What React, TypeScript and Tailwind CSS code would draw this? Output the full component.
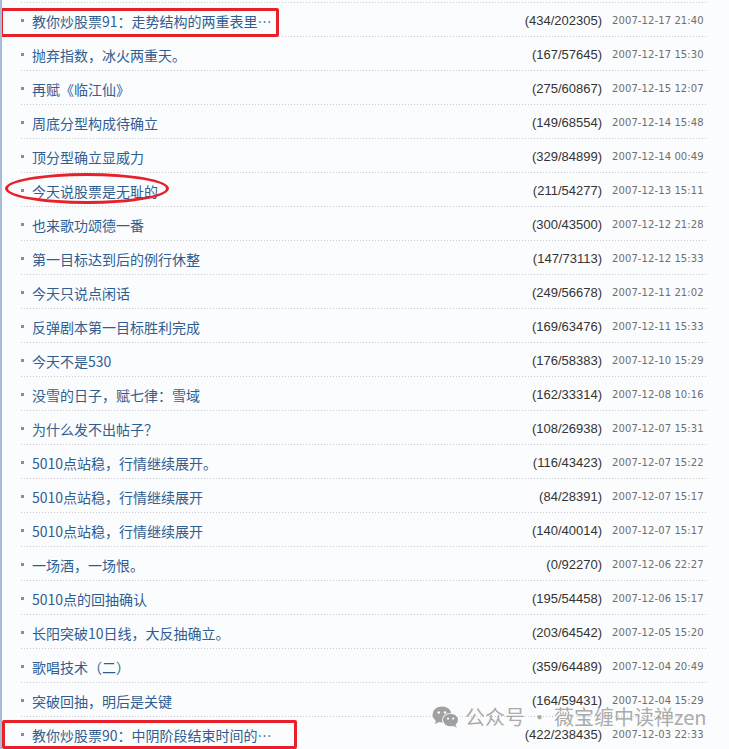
import React from "react";

const rows: [string, string, string][] = [
  ["教你炒股票91：走势结构的两重表里…", "(434/202305)", "2007-12-17 21:40"],
  ["抛弃指数，冰火两重天。", "(167/57645)", "2007-12-17 15:30"],
  ["再赋《临江仙》", "(275/60867)", "2007-12-15 12:07"],
  ["周底分型构成待确立", "(149/68554)", "2007-12-14 15:48"],
  ["顶分型确立显威力", "(329/84899)", "2007-12-14 00:49"],
  ["今天说股票是无耻的", "(211/54277)", "2007-12-13 15:11"],
  ["也来歌功颂德一番", "(300/43500)", "2007-12-12 21:28"],
  ["第一目标达到后的例行休整", "(147/73113)", "2007-12-12 15:33"],
  ["今天只说点闲话", "(249/56678)", "2007-12-11 21:02"],
  ["反弹剧本第一目标胜利完成", "(169/63476)", "2007-12-11 15:33"],
  ["今天不是530", "(176/58383)", "2007-12-10 15:29"],
  ["没雪的日子，赋七律：雪域", "(162/33314)", "2007-12-08 10:16"],
  ["为什么发不出帖子？", "(108/26938)", "2007-12-07 15:31"],
  ["5010点站稳，行情继续展开。", "(116/43423)", "2007-12-07 15:22"],
  ["5010点站稳，行情继续展开", "(84/28391)", "2007-12-07 15:17"],
  ["5010点站稳，行情继续展开", "(140/40014)", "2007-12-07 15:17"],
  ["一场酒，一场恨。", "(0/92270)", "2007-12-06 22:27"],
  ["5010点的回抽确认", "(195/54458)", "2007-12-06 15:17"],
  ["长阳突破10日线，大反抽确立。", "(203/64542)", "2007-12-05 15:20"],
  ["歌唱技术（二）", "(359/64489)", "2007-12-04 20:49"],
  ["突破回抽，明后是关键", "(164/59431)", "2007-12-04 15:29"],
  ["教你炒股票90：中阴阶段结束时间的…", "(422/238435)", "2007-12-03 22:33"],
];

function Dots() {
  return (
    <div className="h-px w-full bg-[linear-gradient(to_right,#cacad0_1px,transparent_1px)] bg-[length:3px_1px] bg-repeat-x" />
  );
}

function WeChatIcon() {
  return (
    <svg width="28" height="22" viewBox="0 0 28 22">
      <ellipse cx="10" cy="8.5" rx="9.5" ry="8" fill="#a0a0a0" />
      <path d="M4 14 L3 18 L8 15.5 Z" fill="#a0a0a0" />
      <circle cx="6.8" cy="6.5" r="1.3" fill="#fbfcfd" />
      <circle cx="13" cy="6.5" r="1.3" fill="#fbfcfd" />
      <ellipse cx="18.5" cy="14" rx="8.5" ry="7" fill="#fbfcfd" />
      <ellipse cx="18.5" cy="14" rx="7.5" ry="6.3" fill="#a0a0a0" />
      <path d="M23 18.5 L25 21.5 L20 19.8 Z" fill="#a0a0a0" />
      <circle cx="16" cy="12.6" r="1.1" fill="#fbfcfd" />
      <circle cx="21.2" cy="12.6" r="1.1" fill="#fbfcfd" />
    </svg>
  );
}

export default function App() {
  return (
    <div className="relative h-[749px] w-[729px] overflow-hidden border-l-2 border-[#a9bcd6] bg-[#fbfcfd]">
      <div className="pl-[19px] pr-[23px] pt-[2px]">
        {rows.map(([title, count, date], i) => (
          <div key={i}>
            <Dots />
            <div className="flex h-[33px] items-center pt-[2px]">
              <div className="h-[3px] w-[3px] shrink-0 bg-[#8a8aa8]" />
              <div
                className="ml-[8px] flex-1 truncate text-[14px] leading-[20px] text-[#2f5e92]"
                style={{ fontFamily: '"Noto Sans CJK SC", sans-serif' }}
              >
                {title}
              </div>
              <div
                className="text-right text-[13px] leading-[20px] text-[#333333]"
                style={{ fontFamily: '"Liberation Sans", Arial, sans-serif' }}
              >
                {count}
              </div>
              <div
                className="ml-[10px] w-[94px] shrink-0 whitespace-nowrap text-[10px] leading-[20px] tracking-[0.1px] text-[#6e6e6e]"
                style={{ fontFamily: '"DejaVu Sans", Verdana, sans-serif' }}
              >
                {date}
              </div>
            </div>
          </div>
        ))}
      </div>

      {/* red annotations */}
      <div className="pointer-events-none absolute left-[-2px] top-[8px] h-[29px] w-[279px] rounded-[2px] border-[3px] border-[#e8202a]" />
      <div className="pointer-events-none absolute left-[3px] top-[173px] h-[31px] w-[164px] rounded-[50%] border-[3px] border-[#e8202a]" />
      <div className="pointer-events-none absolute left-[0px] top-[720px] h-[29px] w-[295px] rounded-[2px] border-[3px] border-[#e8202a]" />

      {/* watermark */}
      <div className="pointer-events-none absolute left-[430px] top-[704px] flex items-center gap-[5px]">
        <WeChatIcon />
        <span
          className="whitespace-nowrap text-[20px] leading-[26px] text-[#a0a0a0]/90"
          style={{ fontFamily: '"Noto Sans CJK SC", sans-serif' }}
        >
          公众号 · 薇宝缠中读禅zen
        </span>
      </div>
    </div>
  );
}
